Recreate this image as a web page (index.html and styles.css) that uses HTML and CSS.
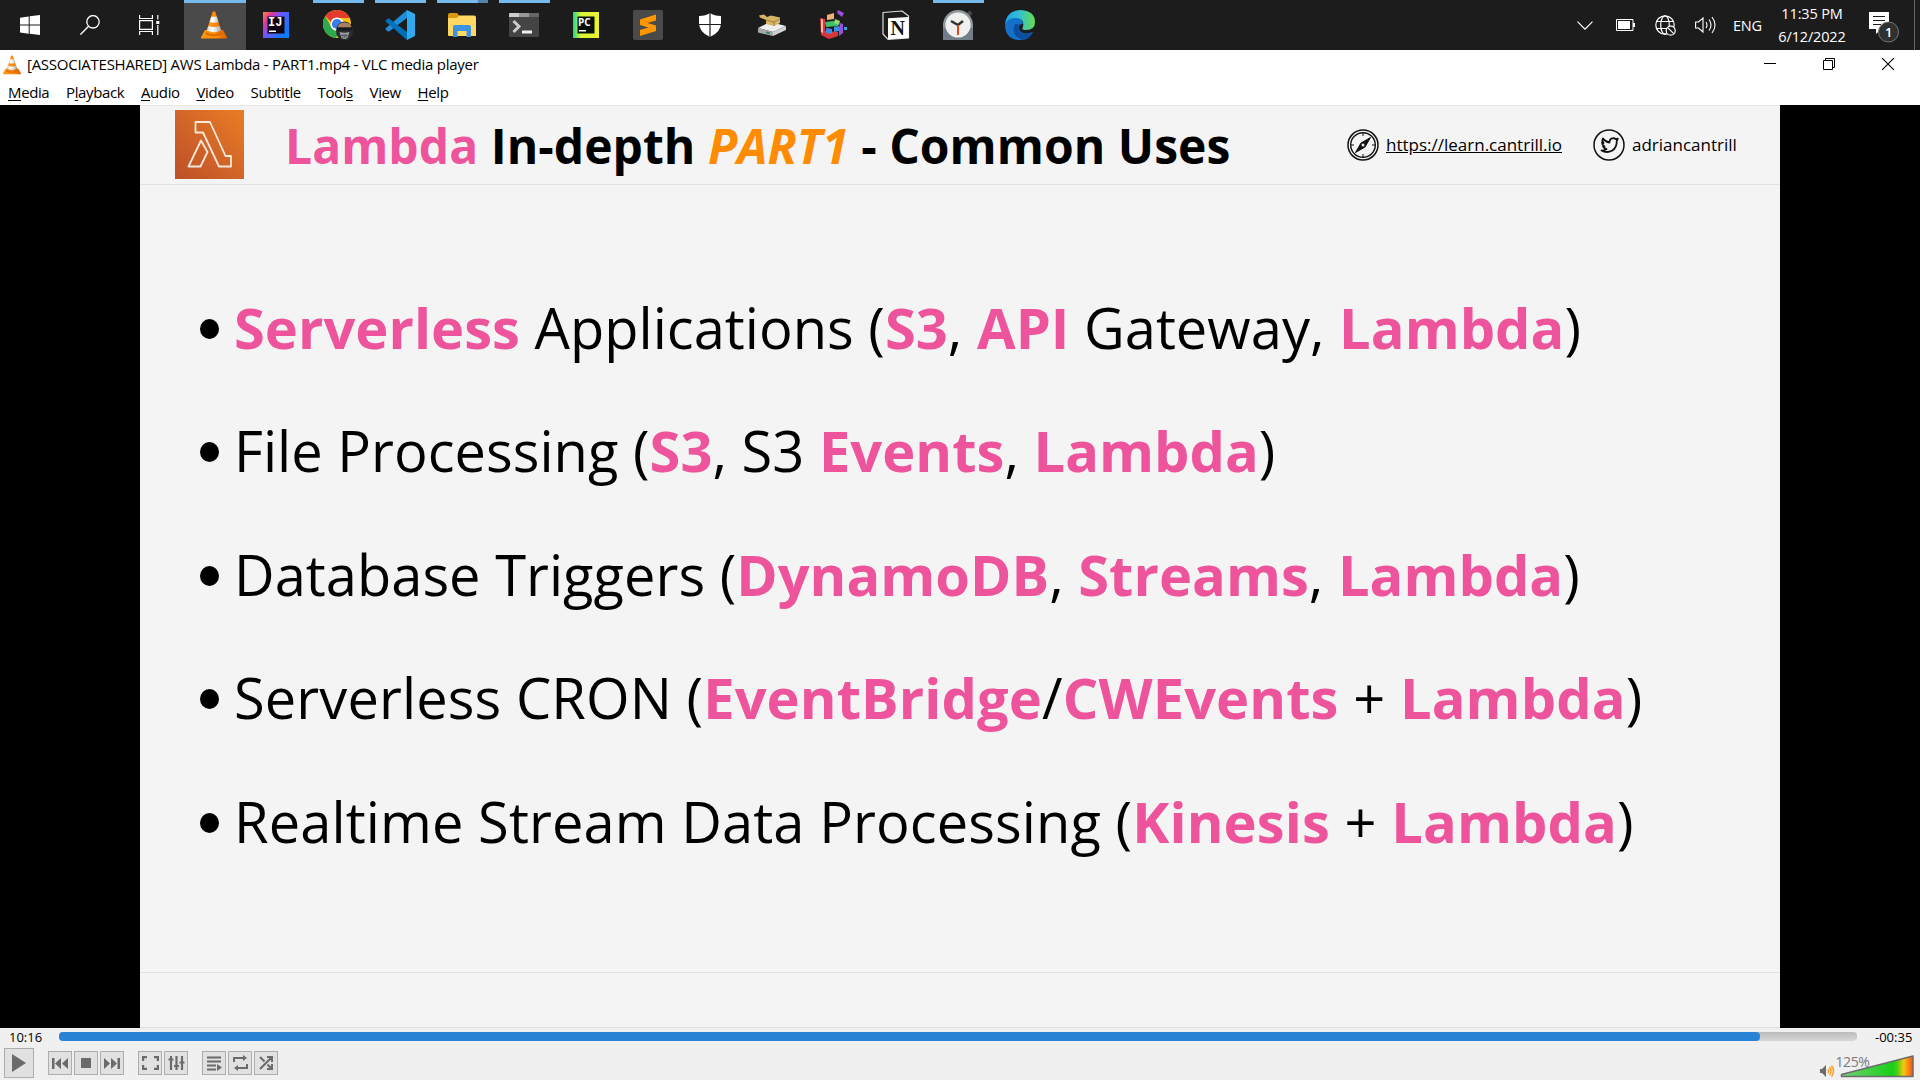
FILE: index.html
```html
<!DOCTYPE html>
<html lang="en">
<head>
<meta charset="utf-8">
<title>VLC media player</title>
<link rel="stylesheet" href="styles.css">
</head>
<body>
<svg class="defs" width="0" height="0" aria-hidden="true">
  <defs>
    <linearGradient id="orange" x1="0" y1="0" x2="1" y2="0"><stop offset="0" stop-color="#ff9a10"/><stop offset=".6" stop-color="#fd8a05"/><stop offset="1" stop-color="#d95f00"/></linearGradient>
    <linearGradient id="white" x1="0" y1="0" x2="1" y2="0"><stop offset="0" stop-color="#d5d5d5"/><stop offset=".4" stop-color="#fff"/><stop offset="1" stop-color="#a8a8a8"/></linearGradient>
    <symbol id="cone" viewBox="0 0 26 28">
      <path d="M4 19h18l4 7.200q.3 1.300-1 1.300H1q-1.300 0-1-1.300z" fill="url(#orange)"/>
      <path d="M5.300 21q7.700 4.500 15.400 0l1 2q-8.700 4.500-17.400 0z" fill="#d96c00"/>
      <path d="M11.700.8q1.300-1.300 2.600 0L20.700 21q-7.700 4.500-15.400 0z" fill="url(#orange)"/>
      <path d="M10.200 5.800h5.600l1.600 5.200q-4.400 1.500-8.800 0zM7.300 15q5.700 2 11.400 0l1.400 4.500q-7.100 3.300-14.200 0z" fill="url(#white)"/>
    </symbol>
  </defs>
</svg>

<header class="taskbar">
  <nav class="apps">
    <span class="sys"><svg width="20" height="20" viewBox="0 0 20 20"><path fill="#fff" d="M0 2.800 8.700 1.500v8.100H0zM9.700 1.300 20 0v9.600H9.700zM0 10.600h8.700v8.100L0 17.400zM9.700 10.600H20V20L9.700 18.700z"/></svg></span>
    <span class="sys"><svg width="20" height="20" viewBox="0 0 20 20" fill="none" stroke="#fff" stroke-width="1.300"><circle cx="13" cy="6.800" r="6.200"/><path d="M8.600 11.200.4 19.600"/></svg></span>
    <span class="sys"><svg width="21" height="20" viewBox="0 0 21 20" fill="none" stroke="#fff" stroke-width="1.200"><path d="M.6 0v3.500h12.800V0M.6 20v-3.500h12.800V20M.6 5.600h12.800v8.800H.6zM18.800 0v4.500M18.800 10v10"/><path fill="#fff" stroke="none" d="M17.300 6h3v3h-3z"/></svg></span>
    <span class="app active"><svg width="26" height="28"><use href="#cone"/></svg></span>
    <span class="app"><svg width="26" height="26" viewBox="0 0 26 26"><defs><linearGradient id="ij" x1="0" y1="0" x2="1" y2=".7"><stop offset="0" stop-color="#f58a3c"/><stop offset=".25" stop-color="#e0359a"/><stop offset=".5" stop-color="#6b57ff"/><stop offset="1" stop-color="#087cfa"/></linearGradient></defs><path fill="url(#ij)" d="M0 0h26v26H0z"/><path d="M4.500 4.500h17v17h-17z" fill="#100414"/><text x="5" y="13.500" class="glyph mono">IJ</text><path d="M6 18.500h7v1.500H6z" fill="#fff"/></svg></span>
    <span class="app open"><svg width="32" height="32" viewBox="0 0 32 32"><circle cx="15" cy="15" r="14" fill="#fbc116"/><path fill="#e33b2e" d="M15 1a14 14 0 0 1 12.500 8H15a6.500 6.500 0 0 0-6 4L3.500 7A14 14 0 0 1 15 1z"/><path fill="#2da94f" d="M3.200 7.300 9.500 18.500a6.500 6.500 0 0 0 8 2.500L14 29A14 14 0 0 1 3.200 7.300z"/><circle cx="15" cy="15" r="6.600" fill="#fff"/><circle cx="15" cy="15" r="5.100" fill="#347ff0"/><ellipse cx="22.500" cy="22" rx="8.500" ry="9.500" fill="#2b2c2e"/><path fill="#ad7d61" d="M15.500 19.500q0-6 7-6t7 6z"/><path fill="#17191c" d="M15 18.300h15v3H15z"/><path fill="#9b9ea2" d="M17.500 23q5 1.500 10 0l-2 6q-3 2-6 0z"/><path stroke="#4b4c4e" stroke-width=".7" d="M19 26.500h7M20.800 25v4M22.500 25v4M24.200 25v4"/></svg></span>
    <span class="app open"><svg width="30" height="30" viewBox="0 0 30 30"><path fill="#1c8edb" d="M.6 19.500 3 21.500h1L22 8V0L.5 18.500z"/><path fill="#0070b8" d="M.6 10.500 3 8.500h1L22 22v8L.5 11.500z"/><path fill="#32a9ee" d="m22 0 8 4v22l-8 4z"/></svg></span>
    <span class="app open stacked"><svg width="28" height="24" viewBox="0 0 28 24"><path fill="#d99812" d="M0 2q0-2 2-2h7l2.500 3H25v6H0z"/><path fill="#ffd762" d="M0 5h9l2-2.500h15q2 0 2 2V23H1q-1 0-1-1z"/><path fill="#3b93dd" d="M5 24V14q0-2 2-2h14q2 0 2 2v10h-4.500v-6h-9v6z"/></svg></span>
    <span class="app open"><svg width="30" height="24" viewBox="0 0 30 24"><rect width="30" height="24" rx="1" fill="#444"/><path fill="#ccc" d="M0 1q0-1 1-1h9v4H0z"/><path fill="#999" d="M10 0h10v4H10z"/><path fill="#666" d="M20 0h10v4H20z"/><path d="m4.500 8 5.500 5.500L4.500 19" fill="none" stroke="#ccc" stroke-width="3"/><path fill="#eee" d="M13 17.500h10v3H13z"/></svg></span>
    <span class="app"><svg width="26" height="28" viewBox="0 0 26 28"><defs><linearGradient id="pc"><stop offset="0" stop-color="#21d789"/><stop offset=".3" stop-color="#d8f536"/><stop offset="1" stop-color="#eef22e"/></linearGradient></defs><path fill="url(#pc)" d="M0 1h26v26H0z"/><path fill="#071008" d="M4.500 5.500h17v17h-17z"/><text x="5" y="14.500" class="glyph">PC</text><path d="M6 19h7v1.500H6z" fill="#fff"/></svg></span>
    <span class="app"><svg width="30" height="32" viewBox="0 0 30 32"><rect width="30" height="30" y="1" rx="2" fill="#4a4a4a"/><path fill="#ff9800" d="m7 10.500 16-5v6L14.500 14 23 16.500V22L7 27v-6l8.500-2.500L7 16z"/></svg></span>
    <span class="app"><svg width="22" height="24" viewBox="0 0 22 24"><path fill="#fff" d="M11 0q4 3 11 3v7q0 9-11 14Q0 19 0 10V3q7 0 11-3z"/><path stroke="#1d1d1d" stroke-width="1.200" d="M11 0v24M0 11.500h22"/></svg></span>
    <span class="app"><svg width="28" height="22" viewBox="0 0 28 22"><path fill="#eee" d="m0 14 12-6 16 4-13 6z"/><path fill="#a6a8a9" d="m0 14 15 4v4L0 18.500z"/><path fill="#cfd1d2" d="m15 18 13-6v4l-13 6z"/><path fill="#26853b" d="m8 17.500 4 1v1.500l-4-1z"/><path fill="#d7b566" d="m1 1.500 5-1 3 2.500 4-1.500 9 2V9l-6 3-8-2V6L2 3.500z"/><path stroke="#a17f3a" fill="none" d="m8 6 8 2 6-3M16 8v4"/></svg></span>
    <span class="app"><svg width="28" height="30" viewBox="0 0 28 30"><path fill="#d8363b" d="m0 8 5 1v12l13 1v4L9 29l-8-4z"/><path fill="#ffb4a8" d="m1 9 2 .5V23l-2-1z"/><path fill="#efb271" d="m7 5 7-2v6l-7 1z"/><path fill="#3fc16c" d="m5 12 8-1 5 2v3l-12 1z"/><path fill="#3f8de8" d="m6 18 6 1v5l-6-1zM14 17l5-1v5l-5 1z"/><path fill="#8edc71" d="m15 9 5 2-1 4-5-2z"/><path fill="#9c50d8" d="m20 13 3 1v9l-4 3v-8zM18 0l6 3-2 4-5-4z"/><path fill="#30a7df" d="M24 17h3v3h-3z"/></svg></span>
    <span class="app"><svg width="28" height="30" viewBox="0 0 28 30"><path fill="#1b1b1b" stroke="#ddd" stroke-width="1.200" stroke-linejoin="round" d="M1 2.500 20 1l6.500 5v22L6 29.300 1 24z"/><path fill="#fff" d="M6 8.200 26.500 7v21L6 29.300z"/><text x="8.500" y="24.500" class="notion">N</text></svg></span>
    <span class="app open"><svg width="30" height="32" viewBox="0 0 30 32"><path fill="#727f8a" d="M0 15h30v16H0z"/><path stroke="#4b4b4b" stroke-width="4" d="m24 7 4-4"/><circle cx="15" cy="16" r="15" fill="#8e989f"/><path fill="#727f8a" d="M0 19h30v12H0z"/><circle cx="15" cy="16" r="12.600" fill="#f0f0ef"/><path fill="none" stroke="#333" stroke-width="2.500" d="m8 12 7 4 5-4"/><path stroke="#e5451d" stroke-width="2" d="M15 16v10"/></svg></span>
    <span class="app"><svg width="30" height="32" viewBox="0 0 30 32"><defs><linearGradient id="eg"><stop offset="0" stop-color="#1e9fe8"/><stop offset=".5" stop-color="#35c1d0"/><stop offset="1" stop-color="#66dc48"/></linearGradient></defs><path fill="#1470c9" d="M0 15q1-7 9-7 8 0 9 7-5 0-4 5 3 7 14 3-4 8-13 8Q0 31 0 15z"/><path fill="url(#eg)" d="M0 15Q2 1 16 1q14 1 14 12 0 8-9 8-5 0-3-3 2-9-8-9-7 0-10 6z"/><path fill="#0c4e9e" d="M10 15q-5 12 8 16 7-1 10-8-11 5-14-3-1-3 0-5z"/></svg></span>
  </nav>
  <div class="tray">
    <svg class="chev" width="16" height="9" viewBox="0 0 16 9"><path d="m.5.700 7.500 7.500L15.500.7" fill="none" stroke="#fff" stroke-width="1.200"/></svg>
    <svg class="batt" width="19" height="12" viewBox="0 0 19 12"><path d="M.5.5h16.500v11H.5z" fill="none" stroke="#fff"/><path fill="#fff" d="M2 2h12v8H2zM17 4h2v4h-2z"/></svg>
    <svg class="globe" width="21" height="21" viewBox="0 0 21 21" fill="none" stroke="#fff" stroke-width="1.200"><circle cx="10" cy="10" r="9.200"/><ellipse cx="10" cy="10" rx="4.300" ry="9.200"/><path d="M1 6.500h18M1 13.500h18"/><circle cx="15.700" cy="15.700" r="4.500" fill="#1c1c1c"/><path d="m12.700 12.700 6 6"/></svg>
    <svg class="vol" width="21" height="18" viewBox="0 0 21 18" fill="none" stroke="#fff" stroke-width="1.100"><path d="M.6 6h2.900L8 2v14l-4.500-4H.6zM11 6q2 3 0 6M14 3.500q4 5.500 0 11M17 1q6 8 0 16"/></svg>
    <span class="lang">ENG</span>
    <div class="clock"><span>11:35 PM</span><span>6/12/2022</span></div>
    <div class="notif"><svg width="31" height="31" viewBox="0 0 31 31"><path fill="#fff" d="M0 0h20v17H12l-5 5v-5H0z"/><path stroke="#1c1c1c" d="M4 4.500h12M4 8.500h12M4 12.500h8"/><circle cx="19.500" cy="20" r="10" fill="#303030" stroke="#777"/><text x="16" y="25" class="count">1</text></svg></div>
  </div>
</header>

<div class="titlebar">
  <svg width="18" height="20"><use href="#cone"/></svg>
  <h1>[ASSOCIATESHARED] AWS Lambda - PART1.mp4 - VLC media player</h1>
  <div class="winbtns">
    <svg width="12" height="12"><path d="M0 5.500h12" stroke="#000"/></svg>
    <svg width="12" height="12" fill="none" stroke="#000"><path d="M.5 2.500h9v9h-9zM2.500 2.500v-2h9v9h-2"/></svg>
    <svg width="12" height="12"><path d="m0 0 12 12M12 0 0 12" stroke="#000" stroke-width="1.100"/></svg>
  </div>
</div>
<nav class="menubar">
  <span><u>M</u>edia</span><span>P<u>l</u>ayback</span><span><u>A</u>udio</span><span><u>V</u>ideo</span><span>Subti<u>t</u>le</span><span>Tool<u>s</u></span><span>V<u>i</u>ew</span><span><u>H</u>elp</span>
</nav>

<main class="video">
  <section class="slide">
    <div class="slide-head">
      <svg class="lambda" width="69" height="69" viewBox="0 0 69 69"><defs><linearGradient id="lg" x1="0" y1="1" x2="1" y2="0"><stop offset="0" stop-color="#bd4f28"/><stop offset="1" stop-color="#e87d26"/></linearGradient></defs><path fill="url(#lg)" d="M0 0h69v69H0z"/><path fill="none" stroke="#fbe9dc" stroke-width="1.800" stroke-linejoin="round" d="M20.500 12H35l15.500 34H56v10.500H44L28 22.500h-7.500zM26 30.500 13.500 56.500H25.500L32.500 42z"/></svg>
      <h2><span class="pink">Lambda</span> In-depth <i>PART1</i> - Common Uses</h2>
      <svg class="compass" width="32" height="32" viewBox="0 0 32 32" fill="none" stroke="#111"><circle cx="16" cy="16" r="15" stroke-width="1.500"/><circle cx="16" cy="16" r="12.300" stroke-width="1.400"/><path d="M16 4v3M16 25v3M4 16h3M25 16h3"/><path fill="#111" d="m23.500 8.500-5.500 9.500-2-2-2-2zM8.500 23.500 14 14l4 4z"/><circle cx="16" cy="16" r="2" fill="#f3f3f3"/></svg>
      <a class="link">https://learn.cantrill.io</a>
      <svg class="twitter" width="32" height="32" viewBox="0 0 32 32" fill="none" stroke="#111" stroke-width="1.500"><circle cx="16" cy="16" r="15"/><path stroke-width="1.800" stroke-linejoin="round" d="M8.500 21.500q3 .3 5-1.500-2.500-.3-3.500-2.500h1.500q-2.500-1.500-2.500-4l1.500.5q-2-2-.5-4.500 2.500 3.500 6.500 4 0-4 3.700-4.300 1.600 0 2.600 1l2-.5-1 2q0 7-4.500 9.800-5.500 3-10.800 0z"/></svg>
      <span class="handle">adriancantrill</span>
    </div>
    <ul class="points">
      <li><span><b>Serverless</b> Applications (<b>S3</b>, <b>API</b> Gateway, <b>Lambda</b>)</span></li>
      <li><span>File Processing (<b>S3</b>, S3 <b>Events</b>, <b>Lambda</b>)</span></li>
      <li><span>Database Triggers (<b>DynamoDB</b>, <b>Streams</b>, <b>Lambda</b>)</span></li>
      <li class="wide"><span>Serverless CRON (<b>EventBridge</b>/<b>CWEvents</b> + <b>Lambda</b>)</span></li>
      <li class="wide"><span>Realtime Stream Data Processing (<b>Kinesis</b> + <b>Lambda</b>)</span></li>
    </ul>
    <div class="slide-foot"></div>
  </section>
</main>

<footer class="player">
  <div class="seek"><span class="elapsed">10:16</span><div class="track"><div class="fill"></div></div><span class="remain">-00:35</span></div>
  <div class="controls">
    <button class="play"><svg width="14" height="18"><path fill="#6b6b6b" d="M0 0v18l14-9z"/></svg></button>
    <div class="group">
      <button><svg width="16" height="11" viewBox="0 0 16 11" fill="#6b6b6b"><path d="M0 0h2.500v11H0zM9 0v11L3 5.500zM16 0v11l-6-5.500z"/></svg></button>
      <button><svg width="10" height="10"><path fill="#6b6b6b" d="M0 0h10v10H0z"/></svg></button>
      <button><svg width="16" height="11" viewBox="0 0 16 11" fill="#6b6b6b"><path d="M13.500 0H16v11h-2.500zM0 0v11l6-5.500zM7 0v11l6-5.500z"/></svg></button>
    </div>
    <div class="group">
      <button><svg width="17" height="14" fill="none" stroke="#6b6b6b" stroke-width="2.200"><path d="M1.100 5V1.100H5M12 1.100h3.900V5M15.900 9v3.900H12M5 12.900H1.100V9"/></svg></button>
      <button><svg width="17" height="14" fill="none" stroke="#6b6b6b" stroke-width="2.200"><path d="M3 0v14M8.500 0v14M14 0v14M.5 3.500h5M6 10h5M11.500 6.500h5"/></svg></button>
    </div>
    <div class="group">
      <button><svg width="15" height="15" viewBox="0 0 15 15"><path stroke="#6b6b6b" stroke-width="2" d="M0 1.500h14M0 5.500h14M0 9.500h9M0 13.500h9"/><path fill="#6b6b6b" d="m10 8 5 3.500-5 3.500z"/></svg></button>
      <button><svg width="15" height="16" viewBox="0 0 15 16"><path fill="none" stroke="#6b6b6b" stroke-width="2" d="M1 7V3h10M14 9v4H4"/><path fill="#6b6b6b" d="m10 0 4 3-4 3zM5 10l-4 3 4 3z"/></svg></button>
      <button><svg width="15" height="14" viewBox="0 0 15 14"><path fill="none" stroke="#6b6b6b" stroke-width="2" d="M1 13 13 1M1 1l4.500 4.500M8.500 8.500 13 13M8 1h5v5M8 13h5V8"/></svg></button>
    </div>
    <div class="volume">
      <svg width="96" height="32" viewBox="0 0 96 32"><defs><linearGradient id="vg"><stop offset="0" stop-color="#76cf76"/><stop offset=".72" stop-color="#16d016"/><stop offset=".78" stop-color="#4ece12"/><stop offset=".87" stop-color="#f7c811"/><stop offset="1" stop-color="#ff4914"/></linearGradient></defs><g transform="translate(0 9)"><path fill="#6b6b6b" d="M0 13h2l4-4v12l-4-4H0z"/><path fill="none" stroke="#fa9c24" stroke-width="1.500" d="M8 13q1.500 2 0 4M9.500 11q3 4 0 8M11.500 9.500q4 5.500 0 11"/></g><path fill="url(#vg)" stroke="#6b6b6b" stroke-width="1.500" stroke-linejoin="round" d="M21.500 27.500 93 9v20.500H21.500z"/><text x="15.500" y="20" class="pct">125%</text></svg>
    </div>
  </div>
</footer>
</body>
</html>
```
FILE: styles.css
```css
* { box-sizing: border-box; }
body { margin: 0; width: 1920px; height: 1080px; overflow: hidden; display: flex; flex-direction: column; font-family: "Open Sans", "Noto Sans", sans-serif; background: #fff; }
.defs { position: absolute; }
svg { display: block; flex: none; }
h1, h2, ul { margin: 0; padding: 0; font-weight: 400; list-style: none; }

.taskbar { height: 50px; flex: none; background: #1c1c1c; color: #fff; display: flex; justify-content: space-between; }
.apps { display: flex; }
.sys { width: 60px; display: grid; place-items: center; }
.sys:nth-child(3) { width: 63.500px; padding-right: 4px; }
.app { width: 62px; padding-right: 1px; display: grid; place-items: center; background: linear-gradient(#76b9ed, #76b9ed) center top / 0 3px no-repeat; }
.app.open { background-size: 51px 3px; }
.app.active { background-color: #4a4a4a; background-size: 100% 3px; }
.app.stacked { background-image: linear-gradient(90deg, #76b9ed 41px, #5684a8 41px); }
.glyph { font: 700 10px "Open Sans", sans-serif; fill: #fff; }
.glyph.mono { font-family: "Liberation Mono", monospace; font-size: 12px; }
.notion { font: 700 20px "Liberation Serif", serif; fill: #111; }
.count { font: 600 13px "Open Sans", sans-serif; fill: #fff; }
.tray { display: flex; align-items: center; width: 343px; font-size: 14.500px; background: linear-gradient(#666, #666) 337px 0 / 1px 100% no-repeat; }
.batt { margin-left: 23px; }
.globe { margin-left: 20px; }
.vol { margin-left: 19px; }
.lang { margin-left: 17px; width: 30px; letter-spacing: -.2px; }
.clock { margin-left: 9px; width: 80px; height: 47px; display: flex; flex-direction: column; text-align: center; line-height: 23px; letter-spacing: -.15px; white-space: nowrap; }
.notif { margin: 10px 0 0 17px; width: 46px; height: 36px; }

.titlebar { height: 30px; flex: none; display: flex; align-items: center; padding: 0 26px 0 3px; }
.titlebar h1 { margin-left: 6px; padding-bottom: 2px; font-size: 15px; letter-spacing: -.26px; }
.winbtns { margin-left: auto; padding-bottom: 2px; display: flex; gap: 47px; }
.menubar { height: 25px; flex: none; display: flex; gap: 16.700px; padding-left: 8px; font-size: 15px; line-height: 24px; letter-spacing: -.38px; }
.menubar u { text-underline-offset: 2px; }

.video { height: 923px; flex: none; background: #000; display: flex; justify-content: center; }
.slide { width: 1640px; background: #f4f4f4; display: flex; flex-direction: column; border-top: 1px solid #e6e6e6; }
.slide-head { height: 79px; border-bottom: 1px solid #e0e0e0; display: flex; align-items: center; padding: 0 0 1px 35px; color: #000; }
.slide-head h2 { margin-left: 41px; padding-top: 2px; width: 1062px; font-size: 48px; letter-spacing: .04px; font-weight: 700; white-space: nowrap; line-height: 68px; }
.slide-head i { color: #ff8b00; }
.pink, .points b { color: #ed549b; }
.link { margin-left: 7px; width: 207px; font-size: 17px; text-decoration: underline; white-space: nowrap; }
.handle { margin-left: 7px; font-size: 17px; }
.points { flex: 1; padding: 82px 0 0 60px; }
.points li { height: 123.500px; display: flex; align-items: center; font-size: 56px; letter-spacing: .03px; white-space: nowrap; line-height: 78px; color: #000; }
.points li.wide { letter-spacing: .1px; }
.points li::before { content: ""; width: 19px; height: 20px; border-radius: 50%; background: #000; margin-right: 15px; }
.points li span { padding-bottom: 4px; }
.slide-foot { height: 56px; border-top: 1px solid #e2e2e2; border-bottom: 1px solid #ddd; }

.player { height: 52px; background: #f0f0f0; }
.seek { height: 18px; display: flex; align-items: center; font-size: 13px; padding-left: 9px; }
.elapsed { width: 50px; }
.track { width: 1798px; height: 9px; margin-bottom: 1px; border-radius: 4px; background: linear-gradient(#bcbcbc, #d6d6d6); }
.fill { width: 94.600%; height: 100%; border-radius: 4px; background: #2a82d7; }
.remain { margin-left: 18px; }
.controls { display: flex; align-items: center; padding-left: 4px; height: 34px; }
.controls button { width: 24px; height: 24px; padding: 0; border: 1px solid #adadad; background: #e1e1e1; display: grid; place-items: center; }
.controls .play { width: 30px; height: 30px; }
.group { display: flex; gap: 2px; margin-left: 14px; }
.volume { margin: 0 4px 0 auto; }
.pct { font: 14px "Open Sans", sans-serif; letter-spacing: -.4px; fill: #7a7a7a; }
```
